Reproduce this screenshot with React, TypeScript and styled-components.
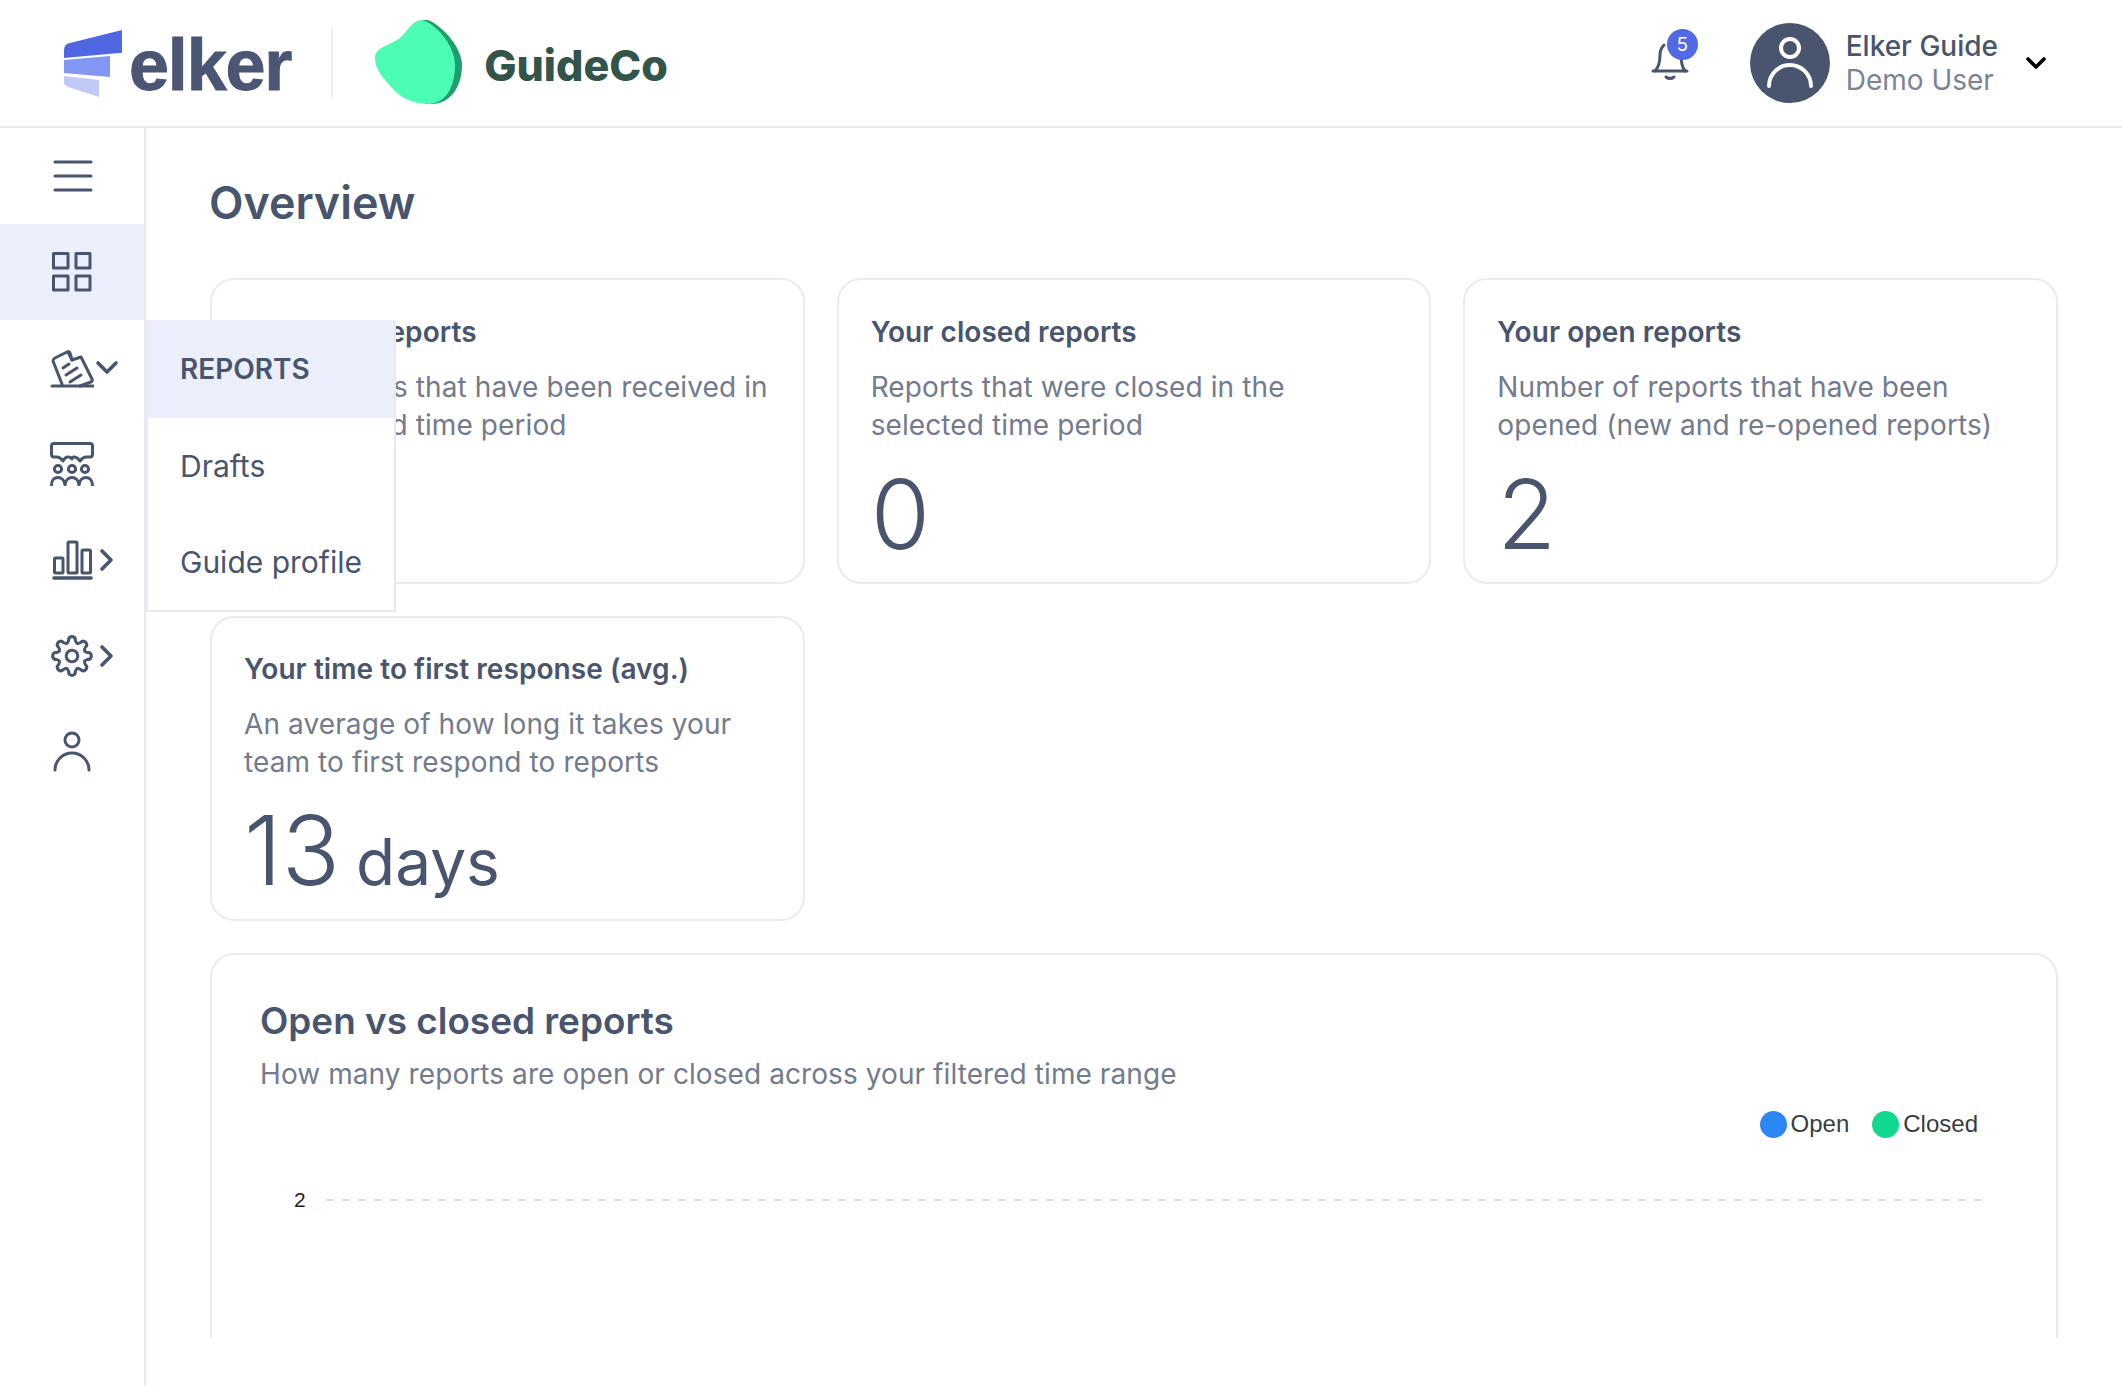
import React from "react";
import styled, { createGlobalStyle } from "styled-components";

const Global = createGlobalStyle`
  html, body { margin: 0; padding: 0; height: 100%; background: #fff; overflow: hidden; }
  body { font-family: Inter, "Liberation Sans", sans-serif; color: #49556f; }
  #root { height: 100%; }
`;

const Page = styled.div`
  height: 1386px;
  display: flex;
  flex-direction: column;
  overflow: hidden;
`;

const Header = styled.header`
  height: 126px;
  flex: none;
  border-bottom: 2px solid #e8eaef;
  display: flex;
  align-items: center;
  padding-left: 64px;
`;

const ElkerMark = styled.svg`
  width: 58px;
  height: 67px;
  flex: none;
`;

const ElkerWord = styled.span`
  font-family: "Liberation Sans", Arial, sans-serif;
  font-weight: 700;
  font-size: 72px;
  letter-spacing: -1.2px;
  -webkit-text-stroke: 1px #4a5674;
  color: #4a5674;
  line-height: 1;
  margin: 4px 0 0 7px;
`;

const LogoDivider = styled.div`
  width: 2px;
  height: 72px;
  background: #eef0f2;
  margin-left: 40px;
`;

const Blob = styled.svg`
  width: 88px;
  height: 86px;
  margin-left: 42px;
  flex: none;
`;

const GuideName = styled.span`
  font-family: Inter, sans-serif;
  font-weight: 800;
  font-size: 43px;
  color: #33544a;
  margin: 4px 0 0 21px;
`;

const HeaderRight = styled.div`
  margin-left: auto;
  display: flex;
  align-items: center;
  padding-right: 75px;
`;

const BellWrap = styled.div`
  position: relative;
  width: 44px;
  height: 44px;
  margin-right: 56px;
`;

const Badge = styled.span`
  position: absolute;
  left: 17px;
  top: -12px;
  width: 31px;
  height: 31px;
  border-radius: 50%;
  background: #5069e4;
  color: #fff;
  font-size: 19px;
  line-height: 31px;
  text-align: center;
`;

const Avatar = styled.div`
  width: 80px;
  height: 80px;
  border-radius: 50%;
  background: #49556f;
  flex: none;
  display: flex;
`;

const UserText = styled.div`
  margin-left: 16px;
  display: flex;
  flex-direction: column;
`;

const UserName = styled.span`
  font-size: 28px;
  font-weight: 500;
  line-height: 34px;
  color: #49556f;
`;

const UserRole = styled.span`
  font-size: 28px;
  line-height: 34px;
  color: #7c8493;
`;

const UserChevron = styled.svg`
  width: 22px;
  height: 14px;
  margin-left: 27px;
`;

const Body = styled.div`
  flex: 1;
  display: flex;
  min-height: 0;
`;

const Sidebar = styled.nav`
  width: 144px;
  flex: none;
  border-right: 2px solid #e8eaf3;
  position: relative;
`;

const NavItem = styled.div<{ $active?: boolean }>`
  height: 96px;
  display: flex;
  align-items: center;
  padding-left: 50px;
  background: ${(p) => (p.$active ? "#ebeefb" : "transparent")};
`;

const NavIcon = styled.svg`
  width: 44px;
  height: 44px;
  flex: none;
  fill: none;
  stroke: #49556f;
  stroke-width: 3;
  stroke-linecap: round;
  stroke-linejoin: round;
`;

const NavChevron = styled.svg<{ $down?: boolean }>`
  width: ${(p) => (p.$down ? "24px" : "16px")};
  height: 24px;
  flex: none;
  margin-left: ${(p) => (p.$down ? "1px" : "5px")};
  fill: none;
  stroke: #49556f;
  stroke-width: 3.6;
  stroke-linecap: round;
  stroke-linejoin: round;
`;

const Flyout = styled.div`
  position: absolute;
  left: 146px;
  top: 192px;
  width: 250px;
  box-sizing: border-box;
  background: #fff;
  border: 2px solid #e8eaef;
  border-top: none;
  z-index: 5;
`;

const FlyoutItem = styled.div<{ $active?: boolean }>`
  height: ${(p) => (p.$active ? "98px" : "96px")};
  display: flex;
  align-items: center;
  padding-left: 32px;
  font-size: ${(p) => (p.$active ? "28px" : "30px")};
  font-weight: ${(p) => (p.$active ? 600 : 400)};
  background: ${(p) => (p.$active ? "#ebeefb" : "#fff")};
  color: #49556f;
`;

const MainWrap = styled.div`
  flex: 1;
  min-width: 0;
  padding-bottom: 48px;
  display: flex;
`;

const Main = styled.main`
  flex: 1;
  overflow: hidden;
  padding: 0 64px;
`;

const Title = styled.h1`
  margin: 0 0 0 -1px;
  height: 150px;
  display: flex;
  align-items: center;
  font-size: 44.8px;
  font-weight: 600;
  color: #49556f;
`;

const CardGrid = styled.div`
  display: grid;
  grid-template-columns: repeat(3, 1fr);
  gap: 32px;
`;

const Card = styled.section<{ $tight?: boolean }>`
  box-sizing: border-box;
  height: ${(p) => (p.$tight ? "305px" : "306px")};
  border: 2px solid #e9ecef;
  border-radius: 24px;
  padding: ${(p) => (p.$tight ? "32px" : "33px")} 32px 0;
  background: #fff;
`;

const CardTitle = styled.h3`
  margin: 0;
  font-size: 28px;
  line-height: 38px;
  font-weight: 600;
  letter-spacing: 0.06px;
  color: #49556f;
`;

const CardDesc = styled.p`
  margin: 17px 0 0;
  font-size: 28px;
  line-height: 38px;
  letter-spacing: 0.1px;
  color: #737b8c;
`;

const Stat = styled.div<{ $tight?: boolean }>`
  margin-top: ${(p) => (p.$tight ? "24px" : "25px")};
  height: 90px;
  font-size: 96px;
  line-height: 90px;
  font-weight: 300;
  color: #49556f;
`;

const StatUnit = styled.span`
  font-size: 64px;
  line-height: 1;
  font-weight: 400;
  margin-left: 16px;
`;

const ChartCard = styled.section`
  box-sizing: border-box;
  margin-top: 32px;
  border: 2px solid #e9ecef;
  border-radius: 24px;
  padding: 42px 48px 0;
  height: 520px;
`;

const ChartTitle = styled.h2`
  margin: 0;
  font-size: 36.9px;
  line-height: 48px;
  font-weight: 600;
  color: #49556f;
`;

const ChartDesc = styled.p`
  margin: 10px 0 0;
  font-size: 28px;
  line-height: 38px;
  letter-spacing: 0.08px;
  color: #737b8c;
`;

const Legend = styled.div`
  display: flex;
  justify-content: flex-end;
  gap: 23px;
  margin-top: 17px;
  padding-right: 30px;
`;

const LegendItem = styled.div`
  display: flex;
  align-items: center;
  gap: 4px;
  font-family: "Liberation Sans", Helvetica, Arial, sans-serif;
  font-size: 24px;
  line-height: 28px;
  color: #373d3f;
`;

const Dot = styled.span<{ $color: string }>`
  width: 27px;
  height: 27px;
  border-radius: 50%;
  background: ${(p) => p.$color};
`;

const GridRow = styled.div`
  display: flex;
  align-items: center;
  margin-top: 50px;
  padding-left: 34px;
  padding-right: 24px;
`;

const AxisLabel = styled.span`
  font-family: "Liberation Sans", Helvetica, Arial, sans-serif;
  font-size: 21px;
  color: #222;
  width: 32px;
  flex: none;
`;

const GridLine = styled.div`
  flex: 1;
  height: 2px;
  background: repeating-linear-gradient(90deg, #e0e0e0 0 8px, transparent 8px 16px);
`;

const gearPath = (() => {
  const cx = 22, cy = 22, teeth = 8;
  const pts: string[] = [];
  for (let i = 0; i < teeth; i++) {
    const a = (i / teeth) * Math.PI * 2 - Math.PI / 2;
    const step = (Math.PI * 2) / teeth;
    const p = (r: number, t: number) =>
      `${(cx + r * Math.cos(a + t)).toFixed(2)} ${(cy + r * Math.sin(a + t)).toFixed(2)}`;
    if (i === 0) pts.push(`M${p(13.6, -step * 0.5)}`);
    pts.push(`Q${p(14, -step * 0.36)} ${p(16, -step * 0.27)}`);
    pts.push(`Q${p(19.4, -step * 0.24)} ${p(19.4, 0)}`);
    pts.push(`Q${p(19.4, step * 0.24)} ${p(16, step * 0.27)}`);
    pts.push(`Q${p(14, step * 0.36)} ${p(13.6, step * 0.5)}`);
  }
  return pts.join(" ") + "Z";
})();

const ChevRight = () => (
  <NavChevron viewBox="0 0 16 24">
    <path d="M3 3l9 9-9 9" />
  </NavChevron>
);

const cards = [
  { t: "Your new reports", d: "New reports that have been received in the selected time period", n: "" },
  { t: "Your closed reports", d: "Reports that were closed in the selected time period", n: "0" },
  { t: "Your open reports", d: "Number of reports that have been opened (new and re-opened reports)", n: "2" },
];

export default function App() {
  return (
    <Page>
      <Global />
      <Header>
        <ElkerMark viewBox="0 0 58 67">
          <path d="M58 0V22.7L0 28V20Q0 14 6 13Z" fill="#4f68e2" />
          <path d="M0 30L46 26V47L0 43Z" fill="#8296f3" />
          <path d="M0 46L35 50V67L4 57Q0 55 0 53Z" fill="#c0c9f8" />
        </ElkerMark>
        <ElkerWord>elker</ElkerWord>
        <LogoDivider />
        <Blob viewBox="0 0 88 86">
          <path d="M47 0H53C68 6 87 28 87 45C87 68 74 84 57 84H50Z" fill="#1f9d6b" />
          <path d="M47 0C60 3 80 25 80 45C80 68 70 84 53 84C42 84 30 80 22 73C12 62 0 52 0 38C0 28 12 26 22 20C32 14 36 0 47 0Z" fill="#4dfdb5" />
        </Blob>
        <GuideName>GuideCo</GuideName>
        <HeaderRight>
          <BellWrap>
            <svg width="44" height="44" viewBox="0 0 44 44" fill="none" stroke="#49556f" strokeWidth="3" strokeLinecap="round" strokeLinejoin="round">
              <path d="M3 30H37" />
              <path d="M5 30C9 26 10 22 10 14C10 9 12 6 14 4" />
              <path d="M35 30C32 26 31 22 31 14" />
              <path d="M16 36Q20 39 24 36" />
            </svg>
            <Badge>5</Badge>
          </BellWrap>
          <Avatar>
            <svg width="80" height="80" viewBox="0 0 80 80" fill="none" stroke="#fff" strokeWidth="4" strokeLinecap="round">
              <circle cx="40" cy="25" r="9" />
              <path d="M19 63a21 21 0 0 1 42 0" />
            </svg>
          </Avatar>
          <UserText>
            <UserName>Elker Guide</UserName>
            <UserRole>Demo User</UserRole>
          </UserText>
          <UserChevron viewBox="0 0 22 14" fill="none" stroke="#000" strokeWidth="3.6" strokeLinecap="round" strokeLinejoin="round">
            <path d="M3 3l8 8 8-8" />
          </UserChevron>
        </HeaderRight>
      </Header>
      <Body>
        <Sidebar>
          <NavItem>
            <NavIcon viewBox="0 0 44 44">
              <path d="M5 8H41M5 22H41M5 36H41" />
            </NavIcon>
          </NavItem>
          <NavItem $active>
            <NavIcon viewBox="0 0 44 44">
              <rect x="3.5" y="3.5" width="14.5" height="14.5" />
              <rect x="26" y="3.5" width="14" height="14.5" />
              <rect x="3.5" y="26" width="14.5" height="14" />
              <rect x="26" y="26" width="14" height="14" />
            </NavIcon>
          </NavItem>
          <NavItem>
            <NavIcon viewBox="0 0 44 44">
              <path d="M2 40H43" />
              <path d="M12 38L3 15Q3 13 5 12L17 6Q19 5 20 7L22 14L31 11L42 33Q43 35 41 36L30 40" />
              <path d="M18 6L22 14" />
              <path d="M13 22L19 18M16 29L27 22M20 36L31 29" />
            </NavIcon>
            <NavChevron $down viewBox="0 0 24 24">
              <path d="M3 7l9 9 9-9" />
            </NavChevron>
          </NavItem>
          <NavItem>
            <NavIcon viewBox="0 0 44 44">
              <path d="M4 1.5H40Q42.5 1.5 42.5 4V12Q42.5 15 40 15H36Q33 15 30 19Q27 15 24 15Q22 15 22 17Q21 15 18 15Q15 15 13 19Q10 15 7 15H4Q1.5 15 1.5 12V4Q1.5 1.5 4 1.5Z" />
              <circle cx="8" cy="27" r="3.6" />
              <circle cx="22" cy="27" r="3.6" />
              <circle cx="35" cy="27" r="3.6" />
              <path d="M1.5 43C1.5 33 14 33 15 43C16 33 28 33 29 43C30 33 42 33 42.5 43" />
            </NavIcon>
          </NavItem>
          <NavItem>
            <NavIcon viewBox="0 0 44 44">
              <rect x="4.5" y="20" width="8.5" height="15" rx="1" />
              <rect x="18" y="4" width="9" height="31" rx="1" />
              <rect x="32" y="12" width="8.5" height="23" rx="1" />
              <path d="M4 40H41" strokeWidth="3.6" />
            </NavIcon>
            <ChevRight />
          </NavItem>
          <NavItem>
            <NavIcon viewBox="0 0 44 44">
              <path d={gearPath} />
              <circle cx="22" cy="22" r="5.8" />
            </NavIcon>
            <ChevRight />
          </NavItem>
          <NavItem>
            <NavIcon viewBox="0 0 44 44">
              <circle cx="22" cy="10" r="7" />
              <path d="M5 40a17 17 0 0 1 34 0" />
            </NavIcon>
          </NavItem>
          <Flyout>
            <FlyoutItem $active>REPORTS</FlyoutItem>
            <FlyoutItem>Drafts</FlyoutItem>
            <FlyoutItem>Guide profile</FlyoutItem>
          </Flyout>
        </Sidebar>
        <MainWrap>
          <Main>
            <Title>Overview</Title>
            <CardGrid>
              {cards.map((c) => (
                <Card key={c.t}>
                  <CardTitle>{c.t}</CardTitle>
                  <CardDesc>{c.d}</CardDesc>
                  <Stat>{c.n || "\u00a0"}</Stat>
                </Card>
              ))}
              <Card $tight>
                <CardTitle>Your time to first response (avg.)</CardTitle>
                <CardDesc>An average of how long it takes your team to first respond to reports</CardDesc>
                <Stat $tight>
                  13<StatUnit>days</StatUnit>
                </Stat>
              </Card>
            </CardGrid>
            <ChartCard>
              <ChartTitle>Open vs closed reports</ChartTitle>
              <ChartDesc>How many reports are open or closed across your filtered time range</ChartDesc>
              <Legend>
                <LegendItem><Dot $color="#2b87f5" />Open</LegendItem>
                <LegendItem><Dot $color="#0fd98f" />Closed</LegendItem>
              </Legend>
              <GridRow>
                <AxisLabel>2</AxisLabel>
                <GridLine />
              </GridRow>
            </ChartCard>
          </Main>
        </MainWrap>
      </Body>
    </Page>
  );
}
